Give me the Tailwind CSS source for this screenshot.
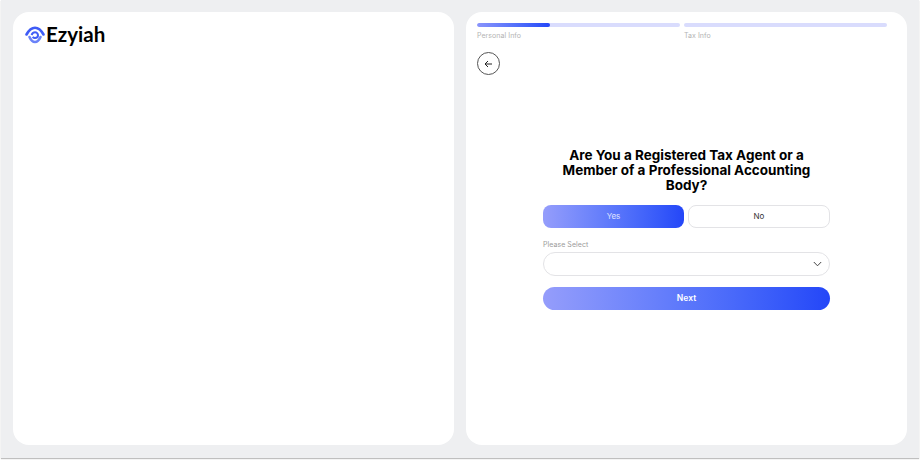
<!DOCTYPE html>
<html>
<head>
<meta charset="utf-8">
<script src="https://cdn.jsdelivr.net/npm/@tailwindcss/browser@4"></script>
</head>
<body class="bg-white w-[920px] h-[461px] overflow-hidden font-['Inter',sans-serif]">
<div class="ml-px w-[918px] h-[458px] bg-[#eeeff1] shadow-[0_1px_1px_rgba(0,0,0,0.25)] pt-3 pl-3 flex gap-3">
  <section class="w-[441px] h-[433px] bg-white rounded-[16px] pt-[11px] pl-[12px]">
    <div class="flex items-center gap-px h-[23px]">
      <svg width="20" height="18" viewBox="0 0 20 18" fill="none">
        <path d="M1.5 8.5 C4 4 7 1.8 10 1.8 C13 1.8 16 4 18.5 8.5" stroke="#3f5cf6" stroke-width="2.6" stroke-linecap="round"/>
        <path d="M4.5 11 C6 14.5 8 16 10 16 C12 16 14 14.5 15.5 11" stroke="#6a82f9" stroke-width="2.6" stroke-linecap="round"/>
        <path d="M6.5 9 C7.5 7 8.8 6.3 10 6.3 C11.6 6.3 13 7.6 13 9.2 C13 10.8 11.6 12 10 12 C9 12 8.2 11.6 7.6 11" stroke="#3f5cf6" stroke-width="2"/>
      </svg>
      <span class="font-['Lato',sans-serif] font-bold text-[20.5px] leading-[23px] text-black">Ezyiah</span>
    </div>
  </section>
  <section class="w-[441px] h-[433px] bg-white rounded-[16px] pt-[11px] px-[11px]">
    <div class="flex gap-1 w-[410px]">
      <div class="w-[203px]">
        <div class="h-1 rounded-full bg-[#d9dcfd] overflow-hidden">
          <div class="h-full w-[73px] rounded-full bg-gradient-to-r from-[#8a94fb] to-[#2446f8]"></div>
        </div>
        <p class="mt-[4px] text-[7px] leading-[10px] tracking-[0.05px] text-[#b3b3b3]">Personal Info</p>
      </div>
      <div class="w-[203px]">
        <div class="h-1 rounded-full bg-[#d9dcfd]"></div>
        <p class="mt-[4px] text-[7px] leading-[10px] tracking-[0.05px] text-[#b3b3b3]">Tax Info</p>
      </div>
    </div>
    <button class="mt-[11px] w-[23px] h-[23px] rounded-full border border-[#555] flex items-center justify-center">
      <svg width="9" height="8" viewBox="0 0 9 8" fill="none" stroke="#222" stroke-width="1">
        <path d="M8 4H1M4 1L1 4L4 7"/>
      </svg>
    </button>
    <div class="w-[287px] mx-auto mt-[73px]">
      <h1 class="w-[260px] mx-auto text-center font-bold text-[13.5px] leading-[15px] text-black">Are You a Registered Tax Agent or a Member of a Professional Accounting Body?</h1>
      <div class="flex gap-1 mt-[12px]">
        <button class="w-[141px] h-[23px] pb-[2px] rounded-[8px] bg-gradient-to-r from-[#959dfb] to-[#2446f8] text-white/80 text-[8px]">Yes</button>
        <button class="w-[142px] h-[23px] pb-[2px] rounded-[8px] bg-white border border-[#e3e3e6] text-[#333] text-[8px]">No</button>
      </div>
      <label class="block mt-[12px] text-[7px] leading-[9px] tracking-[0.05px] text-[#9b9b9b]">Please Select</label>
      <div class="mt-[3px] h-[24px] rounded-[12px] border border-[#e3e3e6] flex items-center justify-end pr-[7px]">
        <svg width="9" height="6" viewBox="0 0 9 6" fill="none" stroke="#444" stroke-width="1"><path d="M0.8 1L4.5 4.8L8.2 1"/></svg>
      </div>
      <button class="block w-full mt-[11px] h-[23px] rounded-[12px] bg-gradient-to-r from-[#959dfb] to-[#2446f8] text-white font-semibold text-[8.5px]">Next</button>
    </div>
  </section>
</div>
</body>
</html>
